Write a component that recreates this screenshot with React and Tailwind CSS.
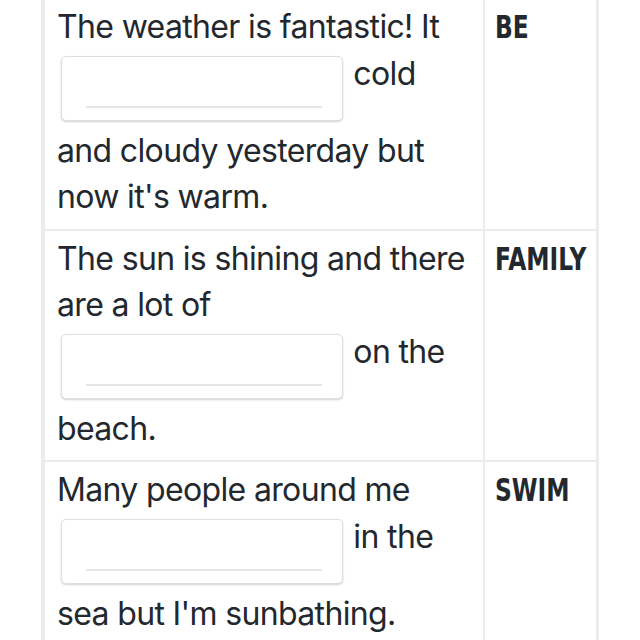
const ROWS = [
  { word: 'BE', before: 'The weather is fantastic! It', after: 'cold and cloudy yesterday but now it\'s warm.' },
  { word: 'FAMILY', before: 'The sun is shining and there are a lot of', after: 'on the beach.' },
  { word: 'SWIM', before: 'Many people around me', after: 'in the sea but I\'m sunbathing.' },
];

function Blank() {
  return (
    <span className="inline-block w-[282px] h-[65px] ml-[4px] mr-[2px] mb-[7px] align-[-43px] rounded-[5px] border border-[#dedede] bg-white shadow-[0_1px_2px_rgba(0,0,0,0.18)]">
      <span className="block mt-[49px] ml-[24px] mr-[20px] h-[2px] bg-[#e6e6e6]" />
    </span>
  );
}

export default function App() {
  return (
    <div className="min-h-screen bg-white overflow-hidden text-[#23282e] font-['Inter','Liberation_Sans',sans-serif]">
      <div className="ml-[41px] w-[558px] -mt-[3px] border-l-4 border-r-[3px] border-[#ececec]">
        {ROWS.map(row => (
          <div key={row.word} className="flex border-t-2 border-[#ececec]">
            <div className="w-[440px] shrink-0 border-r-2 border-[#ececec] pl-3 pr-3 pt-[5px] pb-[8px] text-[32px] leading-[46.5px] tracking-[-0.65px]">
              {row.before} <Blank /> {row.after}
            </div>
            <div className="flex-1 pl-[10px] pt-[5px] text-[32px] leading-[46.5px] font-bold font-['DejaVu_Sans',sans-serif]">
              <span className="inline-block origin-left scale-x-[0.73]">{row.word}</span>
            </div>
          </div>
        ))}
      </div>
    </div>
  );
}
